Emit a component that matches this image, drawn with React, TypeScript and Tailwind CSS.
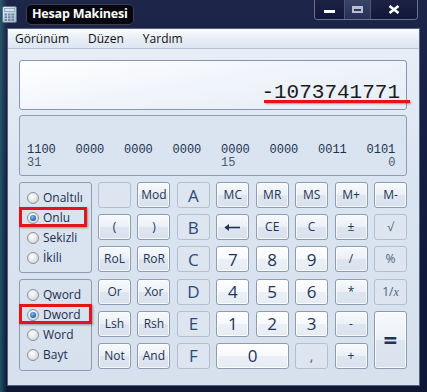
import React from 'react'

const ui = "font-['Open_Sans','Noto_Sans',sans-serif]"
const mono = "font-['Liberation_Mono','DejaVu_Sans_Mono',monospace]"

type Kind = 'op' | 'num' | 'dis' | 'hex'

const kindClass: Record<Kind, string> = {
  op: 'border-[#8e9cb1] bg-[linear-gradient(#f7f9fc,#ebf0f7_50%,#dde5f0_50%,#d9e2ee)] shadow-[inset_0_0_0_1px_rgba(255,255,255,0.75)] text-[#1e3556]',
  num: 'border-[#8e9cb1] bg-[linear-gradient(#ffffff,#f7f9fd_50%,#ebf0f8_50%,#e6ecf5)] shadow-[inset_0_0_0_1px_rgba(255,255,255,0.9)] text-[#1e3556]',
  dis: 'border-[#b3bfce] bg-[#dce5f0] text-[#4f627c]',
  hex: 'border-[#b3bfce] bg-[#dce5f0] text-[#2d4a78]',
}

function Btn({ label, kind = 'op', size = 'text-[12px]', className = '' }: { label: React.ReactNode; kind?: Kind; size?: string; className?: string }) {
  return (
    <div className={`flex items-center justify-center rounded-[3px] border leading-none ${kindClass[kind]} ${size} ${className}`}>
      {label}
    </div>
  )
}

function Radio({ label, checked = false, marked = false, markWidth = 'w-[68px]' }: { label: string; checked?: boolean; marked?: boolean; markWidth?: string }) {
  return (
    <div className="relative flex h-[20px] items-center pl-[7px]">
      <span className="flex h-[12px] w-[12px] items-center justify-center rounded-full border border-[#8b8f96] bg-[radial-gradient(circle_at_40%_35%,#ffffff,#dfe2e6_60%,#c4c9cf)]">
        {checked && <span className="h-[6px] w-[6px] rounded-full bg-[radial-gradient(circle_at_40%_35%,#7fc0f2,#1b5fae_70%,#0e3f80)]" />}
      </span>
      <span className="ml-[4px] text-[12px] text-[#1b2f4d]">{label}</span>
      {marked && (
        <div className={`absolute left-[-1px] top-[-1px] h-[20px] ${markWidth} border-[3px] border-[#e3141c] shadow-[1px_1px_2px_rgba(0,0,0,0.35)]`} />
      )}
    </div>
  )
}

function Arrow() {
  return (
    <svg width="17" height="9" viewBox="0 0 17 9">
      <path d="M1 4.5H16" stroke="#1e3556" strokeWidth="1.6" />
      <path d="M0.5 4.5L5 1V8Z" fill="#1e3556" />
    </svg>
  )
}

function CalcIcon() {
  return (
    <svg width="15" height="17" viewBox="0 0 15 17">
      <defs>
        <linearGradient id="ci" x1="0" y1="0" x2="1" y2="1">
          <stop offset="0" stopColor="#e9f1f8" />
          <stop offset="1" stopColor="#9fb4c8" />
        </linearGradient>
      </defs>
      <rect x="0.5" y="0.5" width="14" height="16" rx="1.5" fill="url(#ci)" stroke="#5d7288" />
      <rect x="2.5" y="2.5" width="10" height="3" fill="#cfe3f2" stroke="#6f879d" strokeWidth="0.6" />
      {[0, 1, 2].map((r) =>
        [0, 1, 2].map((c) => (
          <rect key={`${r}-${c}`} x={2.5 + c * 3.5} y={7.5 + r * 2.8} width="2.5" height="2" fill="#6d8aa6" />
        )),
      )}
    </svg>
  )
}

export default function App() {
  const bits = ['1100', '0000', '0000', '0000', '0000', '0000', '0011', '0101']

  return (
    <div className={`flex h-[392px] w-[427px] flex-col overflow-hidden bg-[linear-gradient(90deg,rgba(48,130,140,0.55),rgba(20,28,60,0)_7px),linear-gradient(#1d2548,#121a3d_60%,#0f1735)] ${ui}`}>
      {/* Title bar */}
      <div className="flex h-[28px] shrink-0 items-start">
        <div className="ml-[2px] mt-[6px]">
          <CalcIcon />
        </div>
        <div className="ml-[9px] mt-[4px] flex h-[21px] items-center rounded-[5px] border border-[#3a3f55] bg-black/80 px-[5px]">
          <span className="text-[12.5px] font-bold tracking-[-0.2px] text-white">Hesap Makinesi</span>
        </div>
        <div className="ml-auto mr-[9px] flex h-[20px] overflow-hidden rounded-b-[4px] border border-t-0 border-[#6b7392]">
          <div className="flex w-[29px] items-end justify-center bg-[linear-gradient(#1c2344,#10173a)] pb-[6px]">
            <div className="h-[3px] w-[11px] bg-white shadow-[0_0_1px_#000]" />
          </div>
          <div className="flex w-[27px] items-center justify-center border-x border-[#4d5676] bg-[linear-gradient(#3a4468,#273054)]">
            <div className="h-[7px] w-[11px] border-[2px] border-t-[3px] border-[#b8bfd2]" />
          </div>
          <div className="flex w-[46px] items-center justify-center bg-[linear-gradient(#1c2344,#10173a)]">
            <svg width="12" height="9" viewBox="0 0 12 9">
              <path d="M1.5 1L10.5 8M10.5 1L1.5 8" stroke="#ffffff" strokeWidth="2.6" />
            </svg>
          </div>
        </div>
      </div>

      {/* Client area */}
      <div className="mx-[7px] flex h-[358px] flex-col border border-[#55627f] bg-[linear-gradient(#e9eff8,#dbe5f1_40%,#d7e1ee)]">
        {/* Menu */}
        <div className="flex h-[20px] shrink-0 items-center gap-[19px] border-b border-[#b7c3d3] bg-[linear-gradient(#fbfcfe,#e8eef7_50%,#dce5f2)] pl-[7px] text-[12px] text-[#111]">
          <span>Görünüm</span>
          <span>Düzen</span>
          <span>Yardım</span>
        </div>

        <div className="flex flex-col pl-[11px] pr-[12px] pt-[11px]">
          {/* Display */}
          <div className="relative flex h-[50px] items-end justify-end rounded-[3px] border border-[#8697ad] bg-[linear-gradient(170deg,#ffffff,#f1f5fb_45%,#e6edf6)] pb-[6px] pr-[6px]">
            <span className={`${mono} text-[21px] leading-none text-[#1b1b1b]`}>-1073741771</span>
            <div className="absolute right-[-4px] top-[39px] h-[3px] w-[146px] bg-[#e3141c] shadow-[1px_1px_2px_rgba(0,0,0,0.35)]" />
          </div>

          {/* Binary panel */}
          <div className={`mt-[5px] flex h-[61px] flex-col justify-end rounded-[3px] border border-[#8e9cb1] bg-[#dae4f0] pb-[5px] pl-[7px] ${mono} text-[12px] leading-[13px]`}>
            <div className="grid grid-cols-[repeat(8,29px)] gap-x-[19.5px] text-[#1d3252]">
              {bits.map((b, i) => (
                <span key={i}>{b}</span>
              ))}
            </div>
            <div className="grid grid-cols-[repeat(8,29px)] gap-x-[19.5px] text-[#4a5a70]">
              <span>31</span>
              <span />
              <span />
              <span />
              <span>15</span>
              <span />
              <span />
              <span className="text-right">0</span>
            </div>
          </div>

          {/* Keys */}
          <div className="mt-[6px] flex gap-[6px]">
            <div className="flex w-[73px] shrink-0 flex-col gap-[6px]">
              <div className="h-[91px] rounded-[3px] border border-[#8e9cb1] pt-[5px]">
                <Radio label="Onaltılı" />
                <Radio label="Onlu" checked marked />
                <Radio label="Sekizli" />
                <Radio label="İkili" />
              </div>
              <div className="h-[92px] rounded-[3px] border border-[#8e9cb1] pt-[5px]">
                <Radio label="Qword" />
                <Radio label="Dword" checked marked markWidth="w-[73px]" />
                <Radio label="Word" />
                <Radio label="Bayt" />
              </div>
            </div>

            <div className="grid w-[309px] grid-cols-8 grid-rows-[repeat(6,26px)] gap-x-[6.4px] gap-y-[6.2px]">
              <Btn label="" kind="dis" />
              <Btn label="Mod" />
              <Btn label="A" kind="hex" size="text-[17px]" />
              <Btn label="MC" />
              <Btn label="MR" />
              <Btn label="MS" />
              <Btn label="M+" />
              <Btn label="M-" />

              <Btn label="(" />
              <Btn label=")" />
              <Btn label="B" kind="hex" size="text-[17px]" />
              <Btn label={<Arrow />} />
              <Btn label="CE" />
              <Btn label="C" />
              <Btn label="±" />
              <Btn label="√" kind="dis" />

              <Btn label="RoL" />
              <Btn label="RoR" />
              <Btn label="C" kind="hex" size="text-[17px]" />
              <Btn label="7" kind="num" size="text-[17px]" />
              <Btn label="8" kind="num" size="text-[17px]" />
              <Btn label="9" kind="num" size="text-[17px]" />
              <Btn label="/" />
              <Btn label="%" kind="dis" />

              <Btn label="Or" />
              <Btn label="Xor" />
              <Btn label="D" kind="hex" size="text-[17px]" />
              <Btn label="4" kind="num" size="text-[17px]" />
              <Btn label="5" kind="num" size="text-[17px]" />
              <Btn label="6" kind="num" size="text-[17px]" />
              <Btn label="*" />
              <Btn label={<span>1/<span className="font-['Liberation_Serif',serif] italic">x</span></span>} kind="dis" />

              <Btn label="Lsh" />
              <Btn label="Rsh" />
              <Btn label="E" kind="hex" size="text-[17px]" />
              <Btn label="1" kind="num" size="text-[17px]" />
              <Btn label="2" kind="num" size="text-[17px]" />
              <Btn label="3" kind="num" size="text-[17px]" />
              <Btn label="-" />
              <Btn label="=" size="text-[24px] font-bold" className="row-span-2" />

              <Btn label="Not" />
              <Btn label="And" />
              <Btn label="F" kind="hex" size="text-[17px]" />
              <Btn label="0" kind="num" size="text-[17px]" className="col-span-2" />
              <Btn label="," kind="dis" size="text-[14px]" />
              <Btn label="+" />
            </div>
          </div>
        </div>
      </div>
    </div>
  )
}
